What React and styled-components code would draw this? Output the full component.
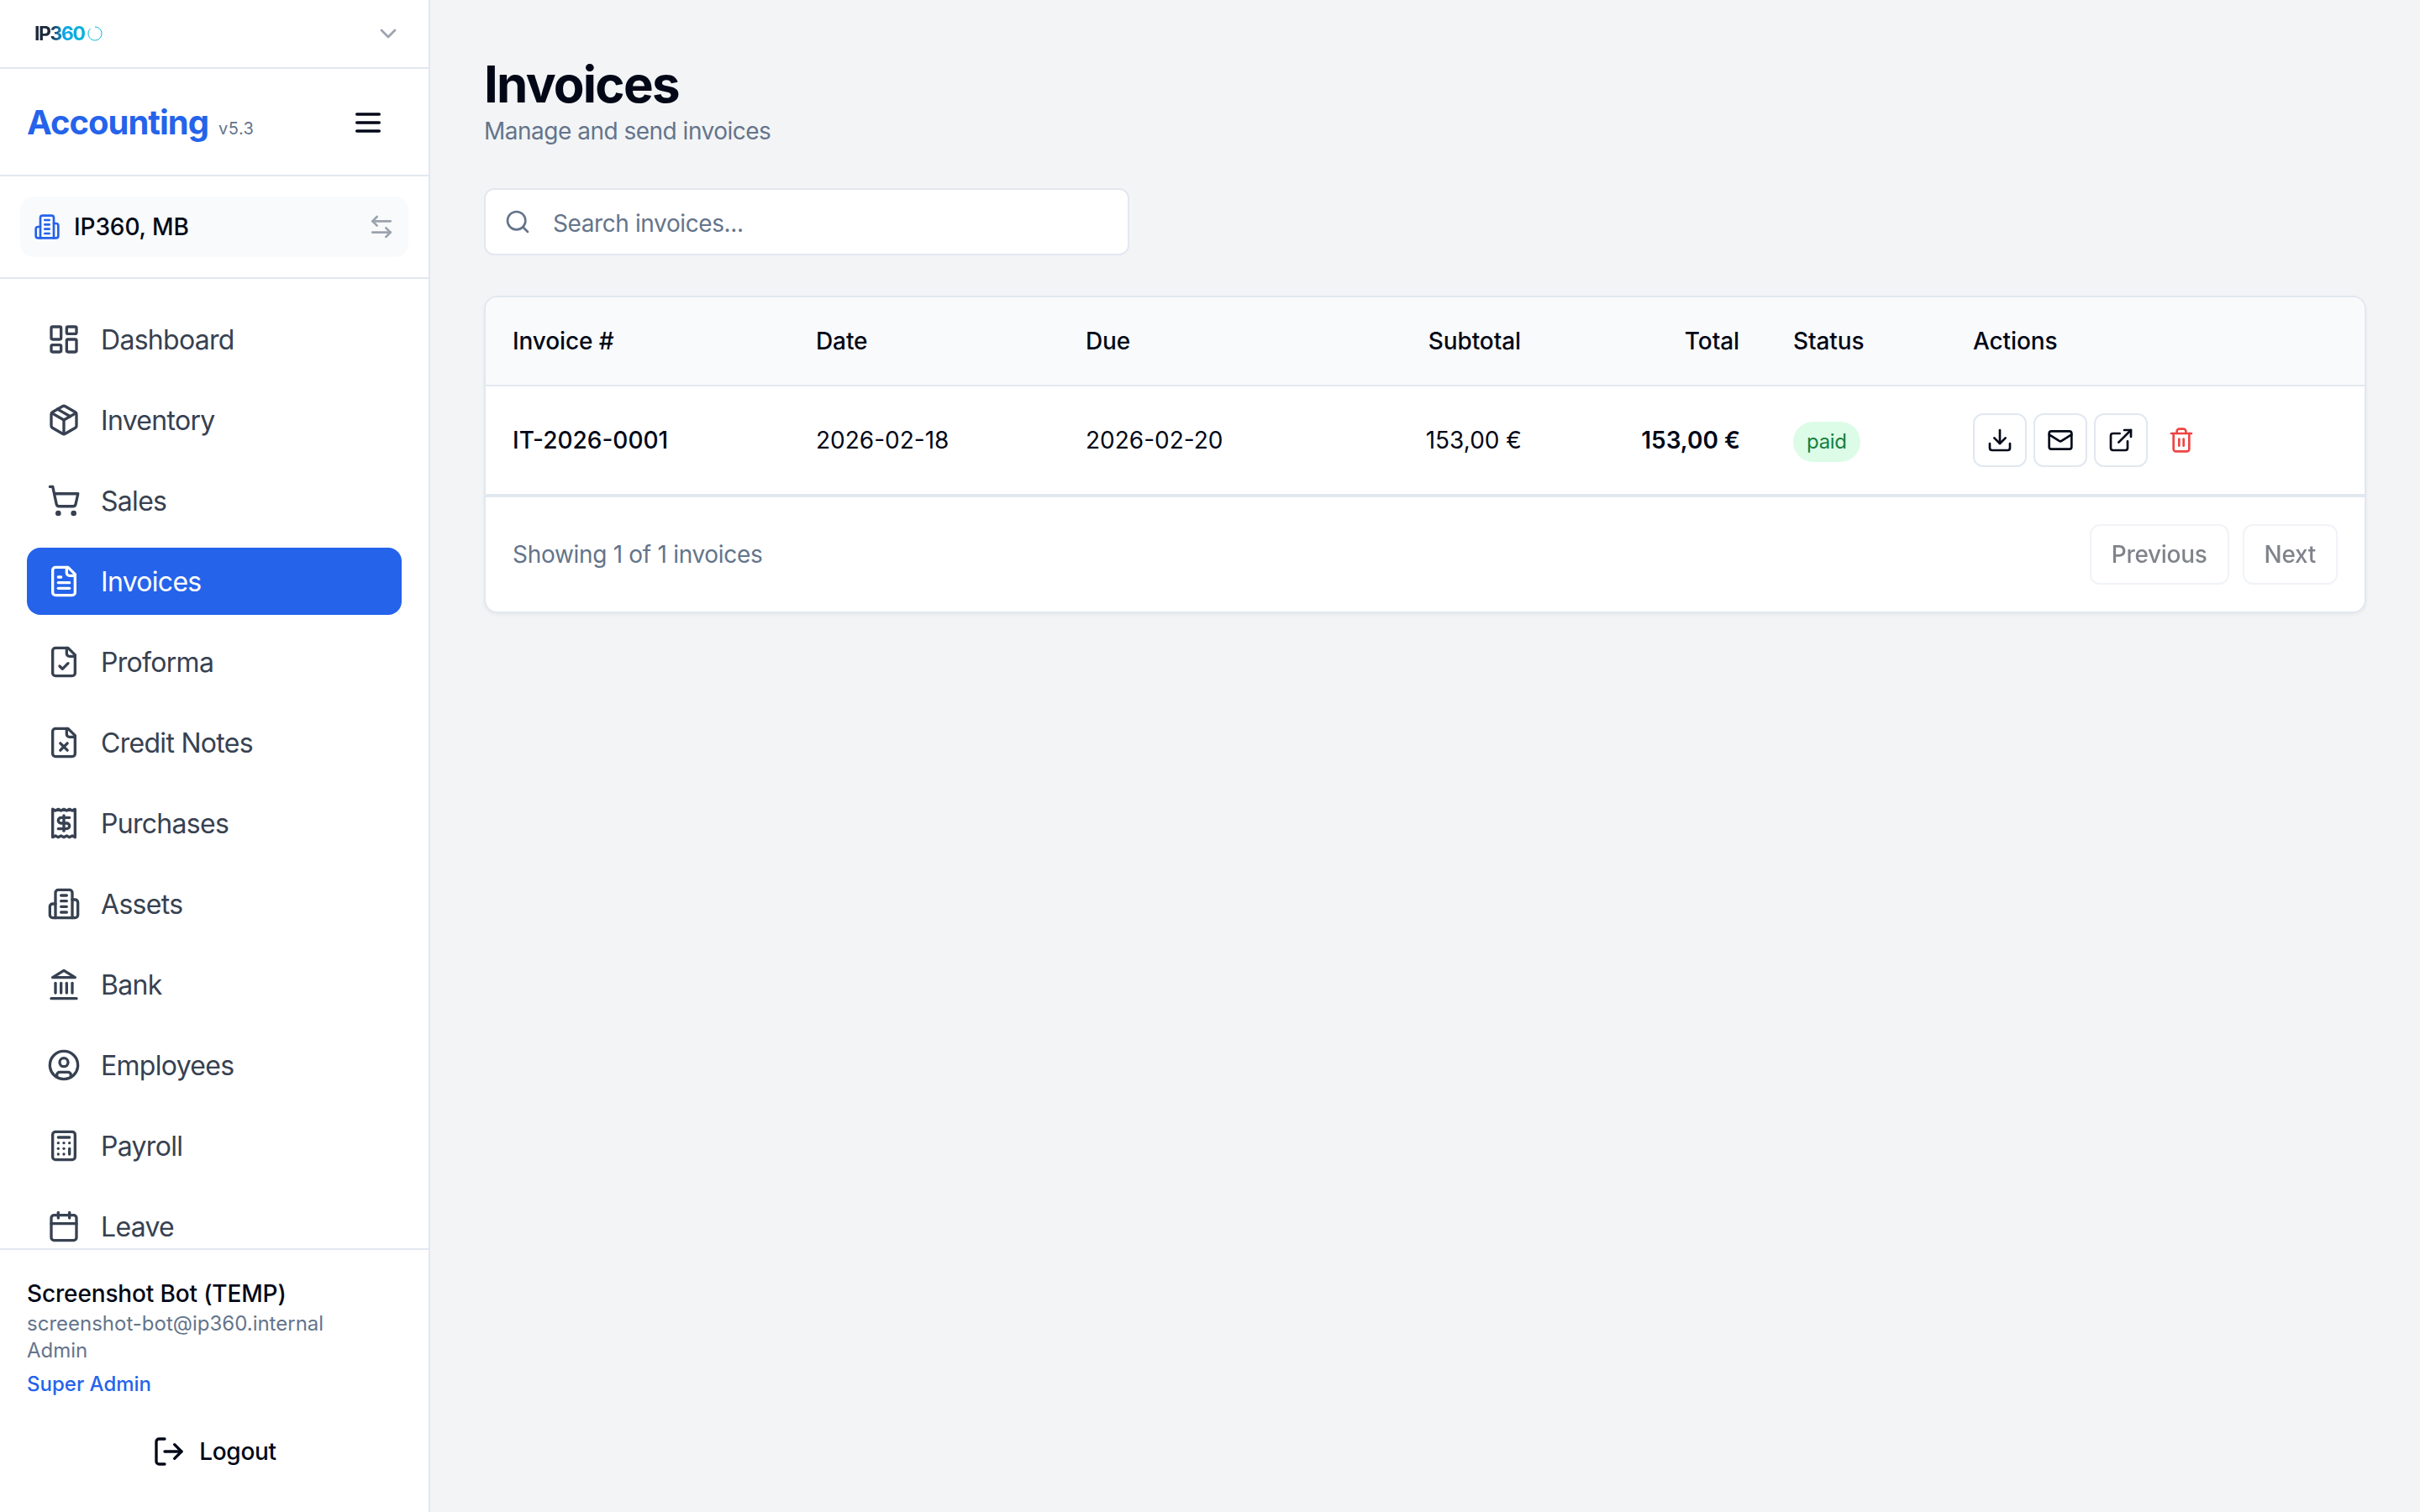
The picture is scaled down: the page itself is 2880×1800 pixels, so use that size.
import React, { useState } from 'react';
import styled, { createGlobalStyle } from 'styled-components';

const GlobalStyle = createGlobalStyle`
  * {
    box-sizing: border-box;
  }

  body {
    margin: 0;
    font-family: Inter, 'Liberation Sans', sans-serif;
    font-size: 28px;
    line-height: 40px;
    color: #020817;
    background: #f3f4f6;
  }

  h1, h2, p {
    margin: 0;
  }

  button, input {
    font-family: inherit;
    color: inherit;
  }
`;

const Layout = styled.div`
  display: flex;
  height: 1800px;
  overflow: hidden;
`;

const Sidebar = styled.aside`
  width: 512px;
  flex-shrink: 0;
  display: flex;
  flex-direction: column;
  background: #ffffff;
  border-right: 2px solid #e2e8f0;
`;

const Svg = styled.svg`
  width: ${props => props.$size}px;
  height: ${props => props.$size}px;
  flex-shrink: 0;
  display: block;
  fill: none;
  stroke: currentColor;
  stroke-width: 2;
  stroke-linecap: round;
  stroke-linejoin: round;
`;

const BrandRow = styled.div`
  height: 82px;
  flex-shrink: 0;
  display: flex;
  align-items: center;
  justify-content: space-between;
  padding: 0 32px 0 41px;
  border-bottom: 2px solid #e2e8f0;
  color: #9ca3af;
`;

const Brand = styled.div`
  display: flex;
  align-items: center;
  gap: 3px;
  color: #06b6d4;
`;

const BrandText = styled.span`
  font-size: 23px;
  line-height: 30px;
  font-weight: 700;
  letter-spacing: -1.4px;
  background: linear-gradient(90deg, #1e293b 32%, #0ea5e9 58%, #06b6d4 100%);
  background-clip: text;
  -webkit-background-clip: text;
  color: transparent;
`;

const TitleRow = styled.div`
  height: 128px;
  flex-shrink: 0;
  display: flex;
  align-items: center;
  justify-content: space-between;
  padding: 2px 52px 0 32px;
  border-bottom: 2px solid #e2e8f0;
`;

const TitleGroup = styled.div`
  display: flex;
  align-items: baseline;
  gap: 12px;
`;

const AppTitle = styled.h2`
  font-size: 40px;
  line-height: 56px;
  font-weight: 700;
  letter-spacing: -1px;
  color: #2563eb;
`;

const Version = styled.span`
  font-size: 20px;
  line-height: 32px;
  letter-spacing: 0.5px;
  color: #64748b;
`;

const CompanySection = styled.div`
  padding: 24px;
  flex-shrink: 0;
  border-bottom: 2px solid #e2e8f0;
`;

const CompanyButton = styled.div`
  height: 72px;
  display: flex;
  align-items: center;
  gap: 16px;
  padding: 0 16px;
  border-radius: 16px;
  background: #f9fafb;
  font-weight: 500;
  color: #9ca3af;

  svg:first-child {
    color: #2563eb;
  }
`;

const CompanyName = styled.span`
  flex: 1;
  letter-spacing: -0.1px;
  color: #020817;
`;

const Nav = styled.nav`
  flex: 1;
  min-height: 0;
  overflow: hidden;
  display: flex;
  flex-direction: column;
  gap: 16px;
  padding: 32px;
`;

const NavItem = styled.a`
  height: 80px;
  flex-shrink: 0;
  display: flex;
  align-items: center;
  gap: 24px;
  padding: 0 24px;
  border-radius: 16px;
  font-size: 32px;
  line-height: 48px;
  letter-spacing: -0.7px;
  cursor: pointer;
  background: ${props => props.$active ? '#2563eb' : 'transparent'};
  color: ${props => props.$active ? '#ffffff' : '#374151'};
`;

const NavLabel = styled.span`
  padding-top: 2px;
`;

const UserPanel = styled.div`
  height: 314px;
  flex-shrink: 0;
  padding: 32px;
  border-top: 2px solid #e2e8f0;
`;

const UserName = styled.p`
  font-weight: 500;
  letter-spacing: -0.15px;
`;

const UserMeta = styled.p`
  font-size: 24px;
  line-height: 32px;
  color: #64748b;
`;

const UserRole = styled(UserMeta)`
  margin-top: 8px;
  font-weight: 500;
  color: #2563eb;
`;

const LogoutButton = styled.button`
  width: 100%;
  height: 80px;
  margin-top: 24px;
  display: flex;
  align-items: center;
  justify-content: center;
  gap: 16px;
  padding: 0;
  border: none;
  background: transparent;
  font-size: 28px;
  line-height: 40px;
  font-weight: 500;
  letter-spacing: -0.3px;
  cursor: pointer;
`;

const Main = styled.main`
  flex: 1;
  min-width: 0;
  padding: 64px;
`;

const PageTitle = styled.h1`
  font-size: 60px;
  line-height: 72px;
  font-weight: 700;
  letter-spacing: -1.75px;
`;

const PageSubtitle = styled.p`
  letter-spacing: -0.5px;
  color: #64748b;
`;

const SearchBox = styled.label`
  width: 768px;
  height: 80px;
  margin-top: 48px;
  display: flex;
  align-items: center;
  gap: 26px;
  padding: 0 22px;
  border: 2px solid #e2e8f0;
  border-radius: 12px;
  background: #ffffff;
  color: #64748b;
`;

const SearchInput = styled.input`
  flex: 1;
  min-width: 0;
  height: 76px;
  padding: 3px 0 0;
  border: none;
  outline: none;
  background: transparent;
  font-size: 28px;
  letter-spacing: -0.4px;

  &::placeholder {
    color: #64748b;
    opacity: 1;
  }
`;

const Card = styled.section`
  margin-top: 48px;
  border: 2px solid #e2e8f0;
  border-radius: 16px;
  background: #ffffff;
  box-shadow: 0 2px 4px rgba(0, 0, 0, 0.05);
  overflow: hidden;
`;

const Table = styled.table`
  width: 100%;
  table-layout: fixed;
  border-collapse: separate;
  border-spacing: 0;
`;

const Th = styled.th`
  width: ${props => props.$width ? `${props.$width}px` : 'auto'};
  height: 106px;
  padding: 0 32px;
  background: #f9fafb;
  border-bottom: 2px solid #e2e8f0;
  font-weight: 500;
  letter-spacing: -0.1px;
  text-align: ${props => props.$right ? 'right' : 'left'};
`;

const Td = styled.td`
  height: 130px;
  padding: 0 ${props => props.$right ? '31px' : '32px'} 0 32px;
  border-bottom: 2px solid #e2e8f0;
  font-weight: ${props => props.$weight || 400};
  text-align: ${props => props.$right ? 'right' : 'left'};
`;

const StatusBadge = styled.span`
  display: block;
  width: fit-content;
  margin-top: 4px;
  padding: 8px 16px;
  border-radius: 24px;
  background: #dcfce7;
  color: #15803d;
  font-size: 24px;
  line-height: 32px;
  letter-spacing: -0.3px;
`;

const Actions = styled.div`
  display: flex;
  gap: 8px;
`;

const IconButton = styled.button`
  width: 64px;
  height: 64px;
  display: flex;
  align-items: center;
  justify-content: center;
  padding: 0;
  border: 2px solid ${props => props.$danger ? 'transparent' : '#e2e8f0'};
  border-radius: 12px;
  background: #ffffff;
  color: ${props => props.$danger ? '#ef4444' : '#020817'};
  cursor: pointer;
`;

const CardFooter = styled.div`
  display: flex;
  align-items: center;
  justify-content: space-between;
  padding: 32px;
  border-top: 2px solid #e2e8f0;
  letter-spacing: -0.3px;
  color: #64748b;
`;

const Pager = styled.div`
  display: flex;
  gap: 16px;
`;

const PagerButton = styled.button`
  height: 72px;
  padding: 0 24px;
  border: 2px solid #e2e8f0;
  border-radius: 12px;
  background: #ffffff;
  color: #020817;
  font-size: 28px;
  line-height: 40px;
  font-weight: 500;
  letter-spacing: -0.3px;

  &:disabled {
    opacity: 0.5;
  }
`;

const FILE_BODY = [
  'M15 2H6a2 2 0 0 0-2 2v16a2 2 0 0 0 2 2h12a2 2 0 0 0 2-2V7Z',
  'M14 2v4a2 2 0 0 0 2 2h4',
];

// 24x24 stroke icons
const ICONS = {
  chevronDown: ['m6 9 6 6 6-6'],
  menu: ['M4 12h16', 'M4 6h16', 'M4 18h16'],
  swap: ['M8 3 4 7l4 4', 'M4 7h16', 'm16 21 4-4-4-4', 'M20 17H4'],
  building: [
    'M6 22V4a2 2 0 0 1 2-2h8a2 2 0 0 1 2 2v18Z',
    'M6 12H4a2 2 0 0 0-2 2v6a2 2 0 0 0 2 2h2',
    'M18 9h2a2 2 0 0 1 2 2v9a2 2 0 0 1-2 2h-2',
    'M10 6h4', 'M10 10h4', 'M10 14h4', 'M10 18h4',
  ],
  dashboard: [
    'M4 3h5a1 1 0 0 1 1 1v7a1 1 0 0 1-1 1H4a1 1 0 0 1-1-1V4a1 1 0 0 1 1-1Z',
    'M15 3h5a1 1 0 0 1 1 1v3a1 1 0 0 1-1 1h-5a1 1 0 0 1-1-1V4a1 1 0 0 1 1-1Z',
    'M15 12h5a1 1 0 0 1 1 1v7a1 1 0 0 1-1 1h-5a1 1 0 0 1-1-1v-7a1 1 0 0 1 1-1Z',
    'M4 16h5a1 1 0 0 1 1 1v3a1 1 0 0 1-1 1H4a1 1 0 0 1-1-1v-3a1 1 0 0 1 1-1Z',
  ],
  package: [
    'm7.5 4.27 9 5.15',
    'M21 8a2 2 0 0 0-1-1.73l-7-4a2 2 0 0 0-2 0l-7 4A2 2 0 0 0 3 8v8a2 2 0 0 0 1 1.73l7 4a2 2 0 0 0 2 0l7-4A2 2 0 0 0 21 16Z',
    'm3.3 7 8.7 5 8.7-5',
    'M12 22V12',
  ],
  cart: [
    'M7 21a1 1 0 1 0 2 0a1 1 0 1 0-2 0',
    'M18 21a1 1 0 1 0 2 0a1 1 0 1 0-2 0',
    'M2.05 2.05h2l2.66 12.42a2 2 0 0 0 2 1.58h9.78a2 2 0 0 0 1.95-1.57l1.65-7.43H5.12',
  ],
  fileText: [...FILE_BODY, 'M10 9H8', 'M16 13H8', 'M16 17H8'],
  fileCheck: [...FILE_BODY, 'm9 15 2 2 4-4'],
  fileX: [...FILE_BODY, 'm14.5 12.5-5 5', 'm9.5 12.5 5 5'],
  receipt: [
    'M4 2v20l2-1 2 1 2-1 2 1 2-1 2 1 2-1 2 1V2l-2 1-2-1-2 1-2-1-2 1-2-1-2 1Z',
    'M16 8h-6a2 2 0 1 0 0 4h4a2 2 0 1 1 0 4H8',
    'M12 17.5v-11',
  ],
  landmark: ['M3 22h18', 'M6 18v-7', 'M10 18v-7', 'M14 18v-7', 'M18 18v-7', 'M12 2l8 5H4Z'],
  user: [
    'M2 12a10 10 0 1 0 20 0a10 10 0 1 0-20 0',
    'M9 10a3 3 0 1 0 6 0a3 3 0 1 0-6 0',
    'M7 20.662V19a2 2 0 0 1 2-2h6a2 2 0 0 1 2 2v1.662',
  ],
  calculator: [
    'M6 2h12a2 2 0 0 1 2 2v16a2 2 0 0 1-2 2H6a2 2 0 0 1-2-2V4a2 2 0 0 1 2-2Z',
    'M8 6h8', 'M16 14v4', 'M16 10h.01', 'M12 10h.01', 'M8 10h.01',
    'M12 14h.01', 'M8 14h.01', 'M12 18h.01', 'M8 18h.01',
  ],
  calendar: [
    'M8 2v4', 'M16 2v4', 'M3 10h18',
    'M5 4h14a2 2 0 0 1 2 2v14a2 2 0 0 1-2 2H5a2 2 0 0 1-2-2V6a2 2 0 0 1 2-2Z',
  ],
  logout: ['M9 21H5a2 2 0 0 1-2-2V5a2 2 0 0 1 2-2h4', 'm16 17 5-5-5-5', 'M21 12H9'],
  search: ['M3 11a8 8 0 1 0 16 0a8 8 0 1 0-16 0', 'm21 21-4.3-4.3'],
  download: ['M21 15v4a2 2 0 0 1-2 2H5a2 2 0 0 1-2-2v-4', 'm7 10 5 5 5-5', 'M12 15V3'],
  mail: [
    'M4 4h16a2 2 0 0 1 2 2v12a2 2 0 0 1-2 2H4a2 2 0 0 1-2-2V6a2 2 0 0 1 2-2Z',
    'm22 7-8.97 5.7a1.94 1.94 0 0 1-2.06 0L2 7',
  ],
  external: ['M15 3h6v6', 'M10 14 21 3', 'M18 13v6a2 2 0 0 1-2 2H5a2 2 0 0 1-2-2V8a2 2 0 0 1 2-2h6'],
  trash: [
    'M3 6h18',
    'M19 6v14c0 1-1 2-2 2H7c-1 0-2-1-2-2V6',
    'M8 6V4c0-1 1-2 2-2h4c1 0 2 1 2 2v2',
    'M10 11v6', 'M14 11v6',
  ],
};

const Icon = ({ name, size = 32 }) => (
  <Svg $size={size} viewBox="0 0 24 24" aria-hidden="true">
    {ICONS[name].map((d) => <path key={d} d={d} />)}
  </Svg>
);

const NAV_ITEMS = [
  { label: 'Dashboard', icon: 'dashboard' },
  { label: 'Inventory', icon: 'package' },
  { label: 'Sales', icon: 'cart' },
  { label: 'Invoices', icon: 'fileText' },
  { label: 'Proforma', icon: 'fileCheck' },
  { label: 'Credit Notes', icon: 'fileX' },
  { label: 'Purchases', icon: 'receipt' },
  { label: 'Assets', icon: 'building' },
  { label: 'Bank', icon: 'landmark' },
  { label: 'Employees', icon: 'user' },
  { label: 'Payroll', icon: 'calculator' },
  { label: 'Leave', icon: 'calendar' },
];

const INVOICES = [
  {
    number: 'IT-2026-0001',
    date: '2026-02-18',
    due: '2026-02-20',
    subtotal: '153,00 €',
    total: '153,00 €',
    status: 'paid',
  },
];

const App = () => {
  const [active, setActive] = useState('Invoices');
  const [query, setQuery] = useState('');

  const rows = INVOICES.filter((inv) => inv.number.toLowerCase().includes(query.toLowerCase()));

  return (
    <>
      <GlobalStyle />
      <Layout>
        <Sidebar>
          <BrandRow>
            <Brand>
              <BrandText>IP360</BrandText>
              <svg width="18" height="18" viewBox="0 0 18 18" fill="none" stroke="currentColor" strokeWidth="1">
                <path d="M9 1a8 8 0 1 1-5.5 2.2" />
              </svg>
            </Brand>
            <Icon name="chevronDown" />
          </BrandRow>

          <TitleRow>
            <TitleGroup>
              <AppTitle>Accounting</AppTitle>
              <Version>v5.3</Version>
            </TitleGroup>
            <Icon name="menu" size={40} />
          </TitleRow>

          <CompanySection>
            <CompanyButton>
              <Icon name="building" />
              <CompanyName>IP360, MB</CompanyName>
              <Icon name="swap" />
            </CompanyButton>
          </CompanySection>

          <Nav>
            {NAV_ITEMS.map((item) => (
              <NavItem
                key={item.label}
                $active={item.label === active}
                onClick={() => setActive(item.label)}
              >
                <Icon name={item.icon} size={40} />
                <NavLabel>{item.label}</NavLabel>
              </NavItem>
            ))}
          </Nav>

          <UserPanel>
            <UserName>Screenshot Bot (TEMP)</UserName>
            <UserMeta>screenshot-bot@ip360.internal</UserMeta>
            <UserMeta>Admin</UserMeta>
            <UserRole>Super Admin</UserRole>
            <LogoutButton type="button">
              <Icon name="logout" size={40} />
              Logout
            </LogoutButton>
          </UserPanel>
        </Sidebar>

        <Main>
          <PageTitle>Invoices</PageTitle>
          <PageSubtitle>Manage and send invoices</PageSubtitle>

          <SearchBox>
            <Icon name="search" />
            <SearchInput
              value={query}
              onChange={(e) => setQuery(e.target.value)}
              placeholder="Search invoices..."
            />
          </SearchBox>

          <Card>
            <Table>
              <thead>
                <tr>
                  <Th $width={361}>Invoice #</Th>
                  <Th $width={321}>Date</Th>
                  <Th $width={320}>Due</Th>
                  <Th $width={262} $right>Subtotal</Th>
                  <Th $width={260} $right>Total</Th>
                  <Th $width={214}>Status</Th>
                  <Th>Actions</Th>
                </tr>
              </thead>
              <tbody>
                {rows.map((inv) => (
                  <tr key={inv.number}>
                    <Td $weight={500}>{inv.number}</Td>
                    <Td>{inv.date}</Td>
                    <Td>{inv.due}</Td>
                    <Td $right>{inv.subtotal}</Td>
                    <Td $right $weight={600}>{inv.total}</Td>
                    <Td>
                      <StatusBadge>{inv.status}</StatusBadge>
                    </Td>
                    <Td>
                      <Actions>
                        <IconButton type="button"><Icon name="download" /></IconButton>
                        <IconButton type="button"><Icon name="mail" /></IconButton>
                        <IconButton type="button"><Icon name="external" /></IconButton>
                        <IconButton type="button" $danger><Icon name="trash" /></IconButton>
                      </Actions>
                    </Td>
                  </tr>
                ))}
              </tbody>
            </Table>
            <CardFooter>
              <span>Showing {rows.length} of {INVOICES.length} invoices</span>
              <Pager>
                <PagerButton type="button" disabled>Previous</PagerButton>
                <PagerButton type="button" disabled>Next</PagerButton>
              </Pager>
            </CardFooter>
          </Card>
        </Main>
      </Layout>
    </>
  );
};

export default App;
